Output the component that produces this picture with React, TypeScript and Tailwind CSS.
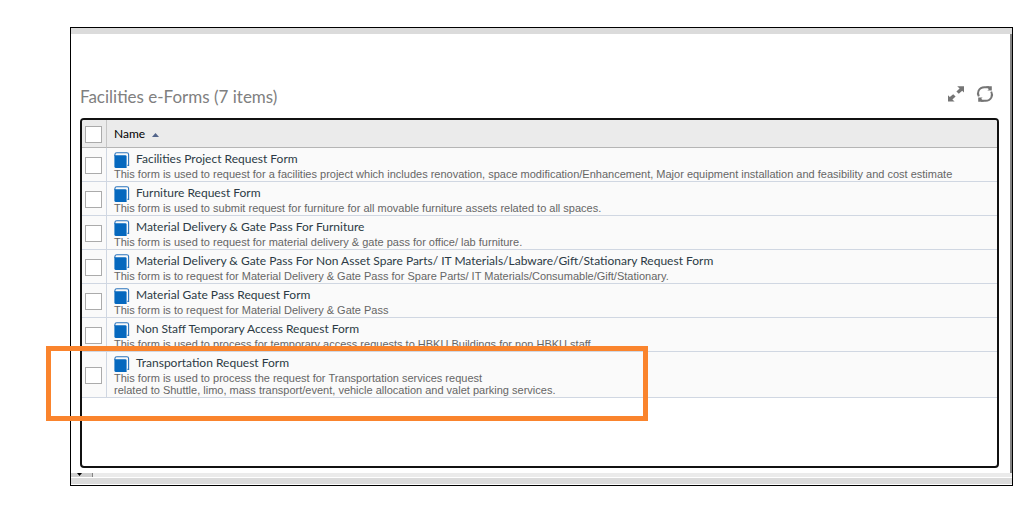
type Form = {
  name: string
  description: string[]
}

const forms: Form[] = [
  {
    name: 'Facilities Project Request Form',
    description: [
      'This form is used to request for a facilities project which includes renovation, space modification/Enhancement, Major equipment installation and feasibility and cost estimate',
    ],
  },
  {
    name: 'Furniture Request Form',
    description: ['This form is used to submit request for furniture for all movable furniture assets related to all spaces.'],
  },
  {
    name: 'Material Delivery & Gate Pass For Furniture',
    description: ['This form is used to request for material delivery & gate pass for office/ lab furniture.'],
  },
  {
    name: 'Material Delivery & Gate Pass For Non Asset Spare Parts/ IT Materials/Labware/Gift/Stationary Request Form',
    description: ['This form is to request for Material Delivery & Gate Pass for Spare Parts/ IT Materials/Consumable/Gift/Stationary.'],
  },
  {
    name: 'Material Gate Pass Request Form',
    description: ['This form is to request for Material Delivery & Gate Pass'],
  },
  {
    name: 'Non Staff Temporary Access Request Form',
    description: ['This form is used to process for temporary access requests to HBKU Buildings for non HBKU staff'],
  },
  {
    name: 'Transportation Request Form',
    description: [
      'This form is used to process the request for Transportation services request',
      'related to Shuttle, limo, mass transport/event, vehicle allocation and valet parking services.',
    ],
  },
]

function BookIcon() {
  return (
    <svg width="16" height="16" viewBox="0 0 16 16" className="mt-px shrink-0" aria-hidden="true">
      <path d="M.9 4V2.6Q.9 .7 2.8 .7H12.8Q14.6 .7 14.6 2.5V13.4H13.4" fill="none" stroke="#2b74bd" strokeWidth="1.1" />
      <path d="M.4 3.2H11.2Q12.6 3.2 12.6 4.6V16H2Q.4 16 .4 14.4Z" fill="#0568be" />
    </svg>
  )
}

function ExpandIcon() {
  return (
    <svg width="16" height="16" viewBox="0 0 16 16" fill="#757575" aria-hidden="true">
      <path d="M9.2 .2H16V6.4L14.2 4.8L10.8 7.8L8.4 5.6L11.6 2.4Z" />
      <path d="M0 9.2L1.8 11L5.2 8.2L7.6 10.4L4.4 13.4L6.6 15.6H0Z" />
    </svg>
  )
}

function RefreshIcon() {
  return (
    <svg width="18" height="16" viewBox="0 0 18 16" fill="none" stroke="#757575" strokeWidth="2" aria-hidden="true">
      <path d="M2.8 10.4Q1.2 7.4 2.6 4.6Q4.4 1.2 8.4 1.2H13" />
      <path d="M15.2 5.6Q16.8 8.6 15.4 11.4Q13.6 14.8 9.6 14.8H5" />
      <path d="M10 .2H15.8V4.6H11.4L12.8 3.2Z" fill="#757575" stroke="none" />
      <path d="M8 15.8H2.2V11.4H6.6L5.2 12.8Z" fill="#757575" stroke="none" />
    </svg>
  )
}

function Checkbox({ label }: { label: string }) {
  return (
    <input
      type="checkbox"
      aria-label={label}
      className="block size-[17px] appearance-none border border-[#ababab] bg-white checked:bg-[#0568be]"
    />
  )
}

export default function App() {
  return (
    <div className="bg-white pt-[27px] pr-[22px] pb-11 pl-[70px] font-['Lato',sans-serif]">
      <div className="relative border border-black bg-white">
        <div className="h-[6px] bg-[#dbdbdb]" />

        <main className="border-r-2 border-[#858585] pt-[50px] pr-[11px] pb-[5px] pl-[9px]">
          <header className="flex h-[34px] items-start justify-between">
            <h1 className="text-[17px] leading-[26px] text-[#808080]">Facilities e-Forms (7 items)</h1>
            <div className="flex gap-3 pt-[2px] pr-[5px]">
              <button type="button" aria-label="Expand" className="h-4">
                <ExpandIcon />
              </button>
              <button type="button" aria-label="Refresh" className="h-4">
                <RefreshIcon />
              </button>
            </div>
          </header>

          <div className="min-h-[350px] overflow-hidden rounded-[4px] border-2 border-[#111]">
            <table className="w-full border-separate border-spacing-0 text-left">
              <thead>
                <tr className="bg-[#ebebeb]">
                  <th className="h-7 w-[25px] border-r border-b border-r-[#c6c6c6] border-b-[#b5b5b5] pt-px pl-[3px]">
                    <Checkbox label="Select all" />
                  </th>
                  <th className="border-b border-[#b5b5b5] pl-[7px] text-[12px] font-normal text-black">
                    <button type="button" className="flex items-center gap-[7px]">
                      Name
                      <svg width="7" height="4" viewBox="0 0 7 4" className="mt-[2px]" aria-hidden="true">
                        <path d="M3.5 0L7 4H0Z" fill="#52648a" />
                      </svg>
                    </button>
                  </th>
                </tr>
              </thead>
              <tbody>
                {forms.map((form) => (
                  <tr key={form.name} className="bg-[#fafafa]">
                    <td className="border-r border-b border-[#d0d7e2] pt-[2px] pl-[3px]">
                      <Checkbox label={form.name} />
                    </td>
                    <td className="border-b border-[#d0d7e2] pt-[3px] pb-px pl-[7px]">
                      <a href="#" className="flex h-[17px] items-start gap-[6px] text-[12px] leading-4 text-[#2c3a45]">
                        <BookIcon />
                        {form.name}
                      </a>
                      {form.description.map((line) => (
                        <p key={line} className="font-['Liberation_Sans',sans-serif] text-[11px] leading-3 text-[#666]">
                          {line}
                        </p>
                      ))}
                    </td>
                  </tr>
                ))}
              </tbody>
            </table>
          </div>
        </main>

        <div className="flex h-1 bg-[#ebebeb]">
          <div className="flex w-[22px] items-start border-r border-[#858585] bg-[#cfcfcf] pl-[6px]">
            <svg width="5" height="3" viewBox="0 0 5 3" aria-hidden="true">
              <path d="M0 0H5L2.5 3Z" fill="#000" />
            </svg>
          </div>
        </div>
        <div className="mt-px mb-px h-[6px] bg-[#dbdbdb]" />

        {/* highlight around the transportation form */}
        <div className="pointer-events-none absolute top-[318px] -left-[25px] h-[75px] w-[602px] border-5 border-[#fa842d]" />
      </div>
    </div>
  )
}
